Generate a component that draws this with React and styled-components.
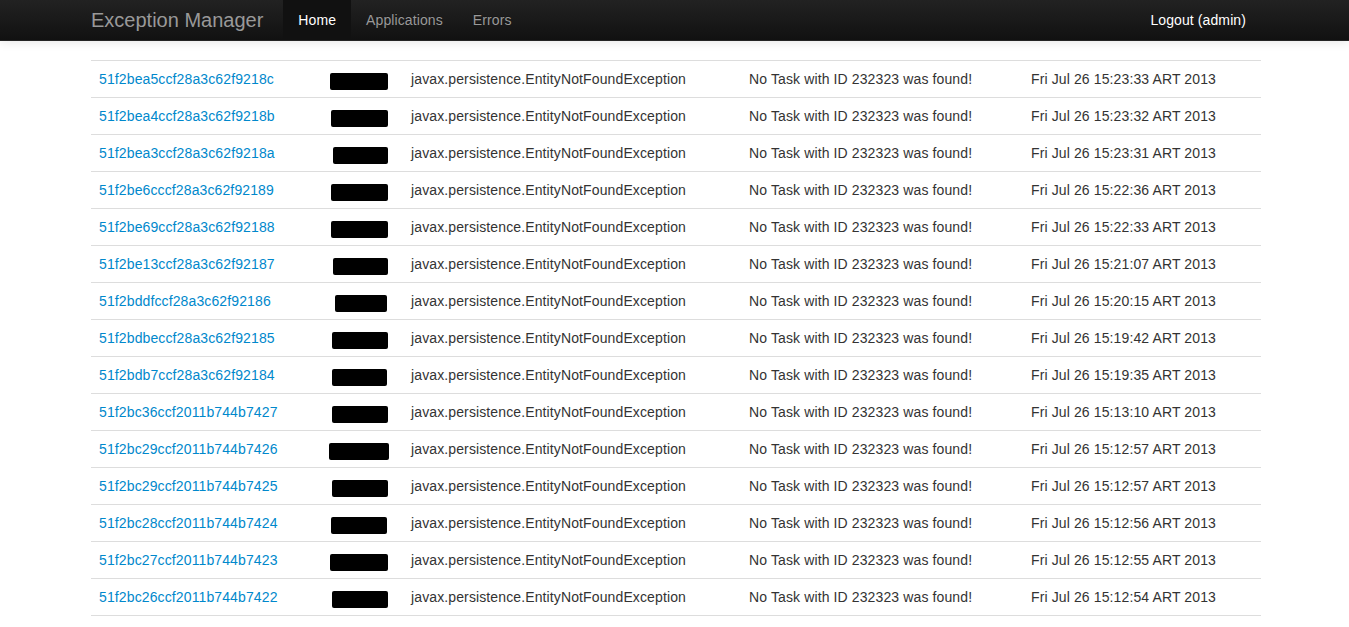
import styled, { createGlobalStyle } from 'styled-components';

const GlobalStyle = createGlobalStyle`
    html, body {
        margin: 0;
        padding: 0;
        background: #fff;
    }
    body {
        font-family: 'Liberation Sans', Arial, Helvetica, sans-serif;
        font-size: 14px;
        line-height: 20px;
        color: #333;
    }
`;

const Navbar = styled.div`
    height: 41px;
    background-color: #1b1b1b;
    background-image: linear-gradient(to bottom, #222222, #111111);
    border-bottom: 1px solid #252525;
    box-shadow: 0 1px 10px rgba(0, 0, 0, 0.1);
    box-sizing: border-box;
`;

const Container = styled.div`
    width: 1170px;
    margin-left: calc(50% - 583.5px);
    display: flex;
    align-items: stretch;
`;

const Brand = styled.a`
    display: block;
    padding: 10px 20px 10px;
    margin-left: -20px;
    font-size: 20px;
    font-weight: 200;
    color: #999;
    text-decoration: none;
    line-height: 20px;
`;

const Nav = styled.ul`
    list-style: none;
    margin: 0;
    padding: 0;
    display: flex;
    flex: 1;
`;

const NavItem = styled.li`
    a {
        display: block;
        padding: 10px 15px 10px;
        color: ${(p) => (p.$active ? '#fff' : '#999')};
        background: ${(p) => (p.$active ? '#111' : 'transparent')};
        text-decoration: none;
        text-shadow: 0 -1px 0 rgba(0, 0, 0, 0.25);
        line-height: 20px;
        letter-spacing: 0.1px;
    }
`;

const Logout = styled.a`
    display: block;
    padding: 10px 15px 10px;
    color: #fff;
    text-decoration: none;
    line-height: 20px;
    letter-spacing: 0.1px;
`;

const Main = styled.div`
    width: 1170px;
    margin: 19px 0 0 calc(50% - 583.5px);
`;

const Table = styled.table`
    width: 100%;
    border-collapse: collapse;
    border-spacing: 0;
    border-bottom: 1px solid #ddd;
    td {
        padding: 8px;
        line-height: 20px;
        text-align: left;
        vertical-align: top;
        border-top: 1px solid #ddd;
        white-space: nowrap;
        letter-spacing: 0.12px;
    }
    a {
        color: #0088cc;
        text-decoration: none;
    }
`;

const Redacted = styled.span`
    display: inline-block;
    vertical-align: middle;
    height: 17px;
    margin-left: ${(p) => p.$left}px;
    width: ${(p) => p.$width}px;
    background: #000;
    border-radius: 2px;
    filter: blur(0.6px);
    position: relative;
    top: 1px;
`;

const rows = [
    ['51f2bea5ccf28a3c62f9218c', '15:23:33', 1, 58],
    ['51f2bea4ccf28a3c62f9218b', '15:23:32', 2, 57],
    ['51f2bea3ccf28a3c62f9218a', '15:23:31', 4, 55],
    ['51f2be6cccf28a3c62f92189', '15:22:36', 2, 57],
    ['51f2be69ccf28a3c62f92188', '15:22:33', 2, 57],
    ['51f2be13ccf28a3c62f92187', '15:21:07', 4, 55],
    ['51f2bddfccf28a3c62f92186', '15:20:15', 6, 52],
    ['51f2bdbeccf28a3c62f92185', '15:19:42', 3, 56],
    ['51f2bdb7ccf28a3c62f92184', '15:19:35', 3, 55],
    ['51f2bc36ccf2011b744b7427', '15:13:10', 3, 56],
    ['51f2bc29ccf2011b744b7426', '15:12:57', 0, 60],
    ['51f2bc29ccf2011b744b7425', '15:12:57', 3, 56],
    ['51f2bc28ccf2011b744b7424', '15:12:56', 2, 56],
    ['51f2bc27ccf2011b744b7423', '15:12:55', 1, 58],
    ['51f2bc26ccf2011b744b7422', '15:12:54', 3, 56],
];

const App = () => {
    return (
        <>
            <GlobalStyle />
            <Navbar>
                <Container>
                    <Brand href='#'>Exception Manager</Brand>
                    <Nav>
                        <NavItem $active>
                            <a href='#'>Home</a>
                        </NavItem>
                        <NavItem>
                            <a href='#'>Applications</a>
                        </NavItem>
                        <NavItem>
                            <a href='#'>Errors</a>
                        </NavItem>
                    </Nav>
                    <Logout href='#'>Logout (admin)</Logout>
                </Container>
            </Navbar>
            <Main>
                <Table>
                    <colgroup>
                        <col style={{ width: 225 }} />
                        <col style={{ width: 87 }} />
                        <col style={{ width: 338 }} />
                        <col style={{ width: 282 }} />
                        <col />
                    </colgroup>
                    <tbody>
                        {rows.map(([id, time, left, width]) => (
                            <tr key={id}>
                                <td>
                                    <a href='#'>{id}</a>
                                </td>
                                <td>
                                    <Redacted $left={left + 5} $width={width} />
                                </td>
                                <td>javax.persistence.EntityNotFoundException</td>
                                <td>No Task with ID 232323 was found!</td>
                                <td>Fri Jul 26 {time} ART 2013</td>
                            </tr>
                        ))}
                    </tbody>
                </Table>
            </Main>
        </>
    );
};

export default App;
